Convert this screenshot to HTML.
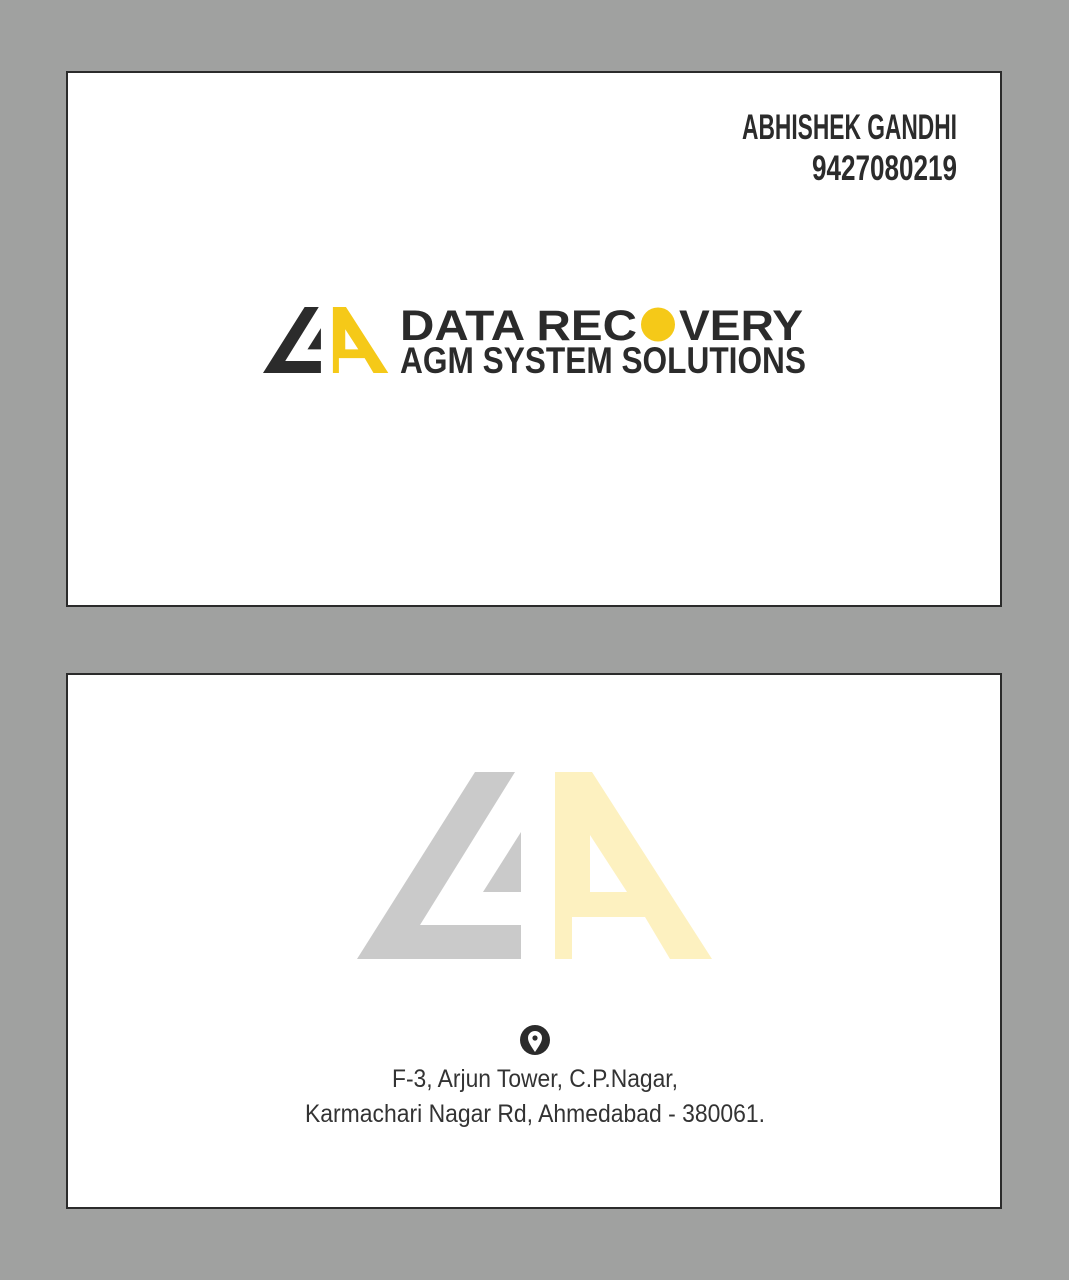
<!DOCTYPE html>
<html><head><meta charset="utf-8"><style>
html,body{margin:0;padding:0;background:#a0a1a0;}
svg{display:block}
</style></head><body>
<svg width="1069" height="1280" viewBox="0 0 1069 1280" xmlns="http://www.w3.org/2000/svg">
<defs>
<g id="lg">
<path d="M118,0 L158,0 L63,153 L164,153 L164,187 L0,187 Z"/>
<path d="M164,60 L164,120 L126,120 Z"/>
</g>
<g id="la">
<path d="M198,0 L235,0 L355,187 L313,187 L288,145 L215,145 L215,187 L198,187 Z M233,63 L233,120 L270,120 Z" fill-rule="evenodd"/>
</g>
</defs>
<rect width="1069" height="1280" fill="#a0a1a0"/>
<rect x="67" y="72" width="934" height="534" fill="#fff" stroke="#2b2b2b" stroke-width="2"/>
<rect x="67" y="674" width="934" height="534" fill="#fff" stroke="#2b2b2b" stroke-width="2"/>

<g font-family="Liberation Sans, sans-serif" font-weight="bold" fill="#2b2b2b">
<text x="957" y="139" font-size="35" text-anchor="end" textLength="215" lengthAdjust="spacingAndGlyphs">ABHISHEK GANDHI</text>
<text x="957" y="180" font-size="35" text-anchor="end" textLength="145" lengthAdjust="spacingAndGlyphs">9427080219</text>
</g>

<g transform="translate(263,307) scale(0.353)">
<use href="#lg" fill="#2b2b2b"/>
<use href="#la" fill="#f5c918"/>
</g>
<g font-family="Liberation Sans, sans-serif" font-weight="bold" fill="#2b2b2b">
<text x="400" y="340" font-size="43" textLength="237" lengthAdjust="spacingAndGlyphs">DATA REC</text>
<circle cx="658" cy="324.5" r="17" fill="#f5c918"/>
<text x="679" y="340" font-size="43" textLength="124" lengthAdjust="spacingAndGlyphs">VERY</text>
<text x="400" y="373" font-size="37" textLength="406" lengthAdjust="spacingAndGlyphs">AGM SYSTEM SOLUTIONS</text>
</g>

<g transform="translate(357,772)">
<use href="#lg" fill="#cacaca"/>
<use href="#la" fill="#fdf1c0"/>
</g>

<circle cx="535" cy="1040" r="15" fill="#2b2b2b"/>
<path d="M535,1052 C531,1046 528,1042 528,1038 A7,7 0 0 1 542,1038 C542,1042 539,1046 535,1052 Z" fill="#fff"/>
<circle cx="535" cy="1038" r="2.6" fill="#2b2b2b"/>

<g font-family="Liberation Sans, sans-serif" fill="#333" font-size="25">
<text x="535" y="1087" text-anchor="middle" textLength="286" lengthAdjust="spacingAndGlyphs">F-3, Arjun Tower, C.P.Nagar,</text>
<text x="535" y="1122" text-anchor="middle" textLength="460" lengthAdjust="spacingAndGlyphs">Karmachari Nagar Rd, Ahmedabad - 380061.</text>
</g>
</svg>
</body></html>
